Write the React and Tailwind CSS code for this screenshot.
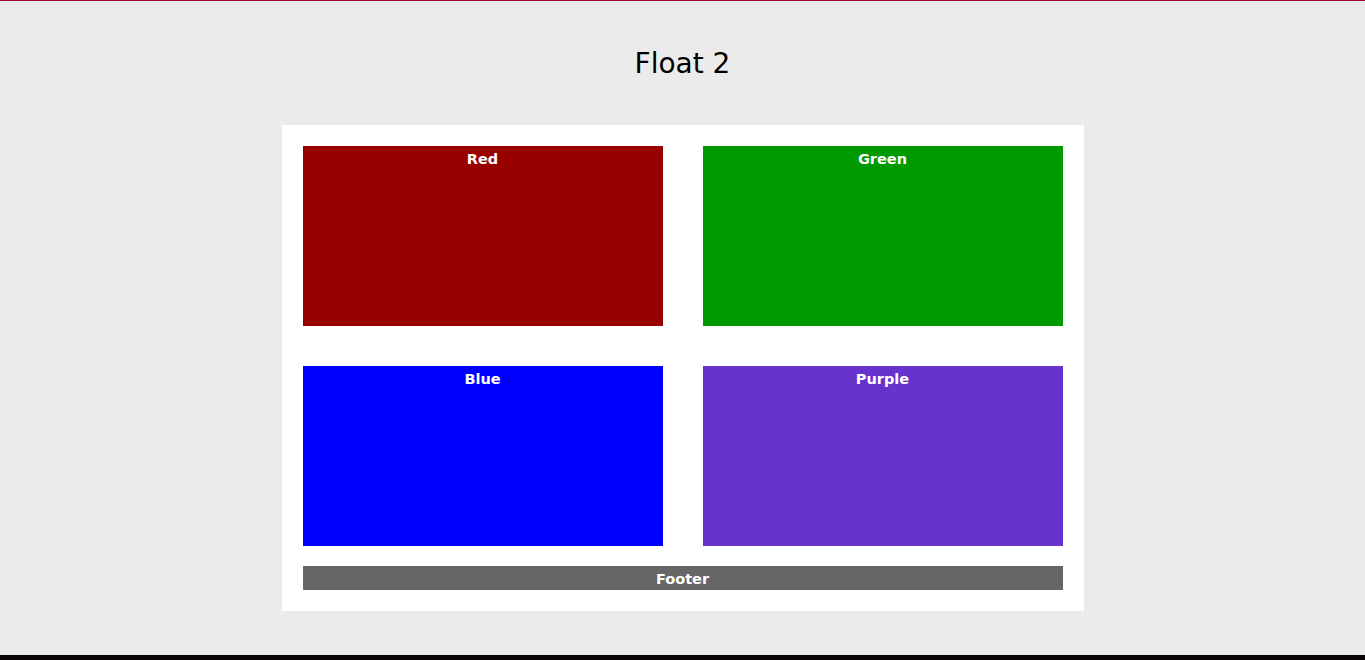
import React from 'react';

const boxes = [
  { name: 'Red', color: 'bg-[#990000]' },
  { name: 'Green', color: 'bg-[#009900]' },
  { name: 'Blue', color: 'bg-[#0000ff]' },
  { name: 'Purple', color: 'bg-[#6633cc]' },
];

function App() {
  return (
    <div className="flex h-[660px] flex-col bg-[#ebebeb] font-['DejaVu_Sans',sans-serif]">
      <div className="h-px bg-[#990033]" />
      <div className="flex-1">
        <h1 className="mt-[43px] text-center text-[28px] leading-[40px] text-black">Float 2</h1>
        <div className="mx-auto mt-[41px] w-[802px] bg-white p-[21px]">
          <div className="grid grid-cols-2 gap-x-[40px] gap-y-[40px]">
            {boxes.map((b) => (
              <div key={b.name} className={`h-[180px] ${b.color} pt-px text-center text-[14.5px] font-bold leading-[24px] text-white`}>
                {b.name}
              </div>
            ))}
          </div>
          <div className="mt-[20px] h-[24px] bg-[#666666] pt-px text-center text-[14.5px] font-bold leading-[24px] text-white">
            Footer
          </div>
        </div>
      </div>
      <div className="h-[5px] bg-[#0c0606]" />
    </div>
  );
}

export default App;
